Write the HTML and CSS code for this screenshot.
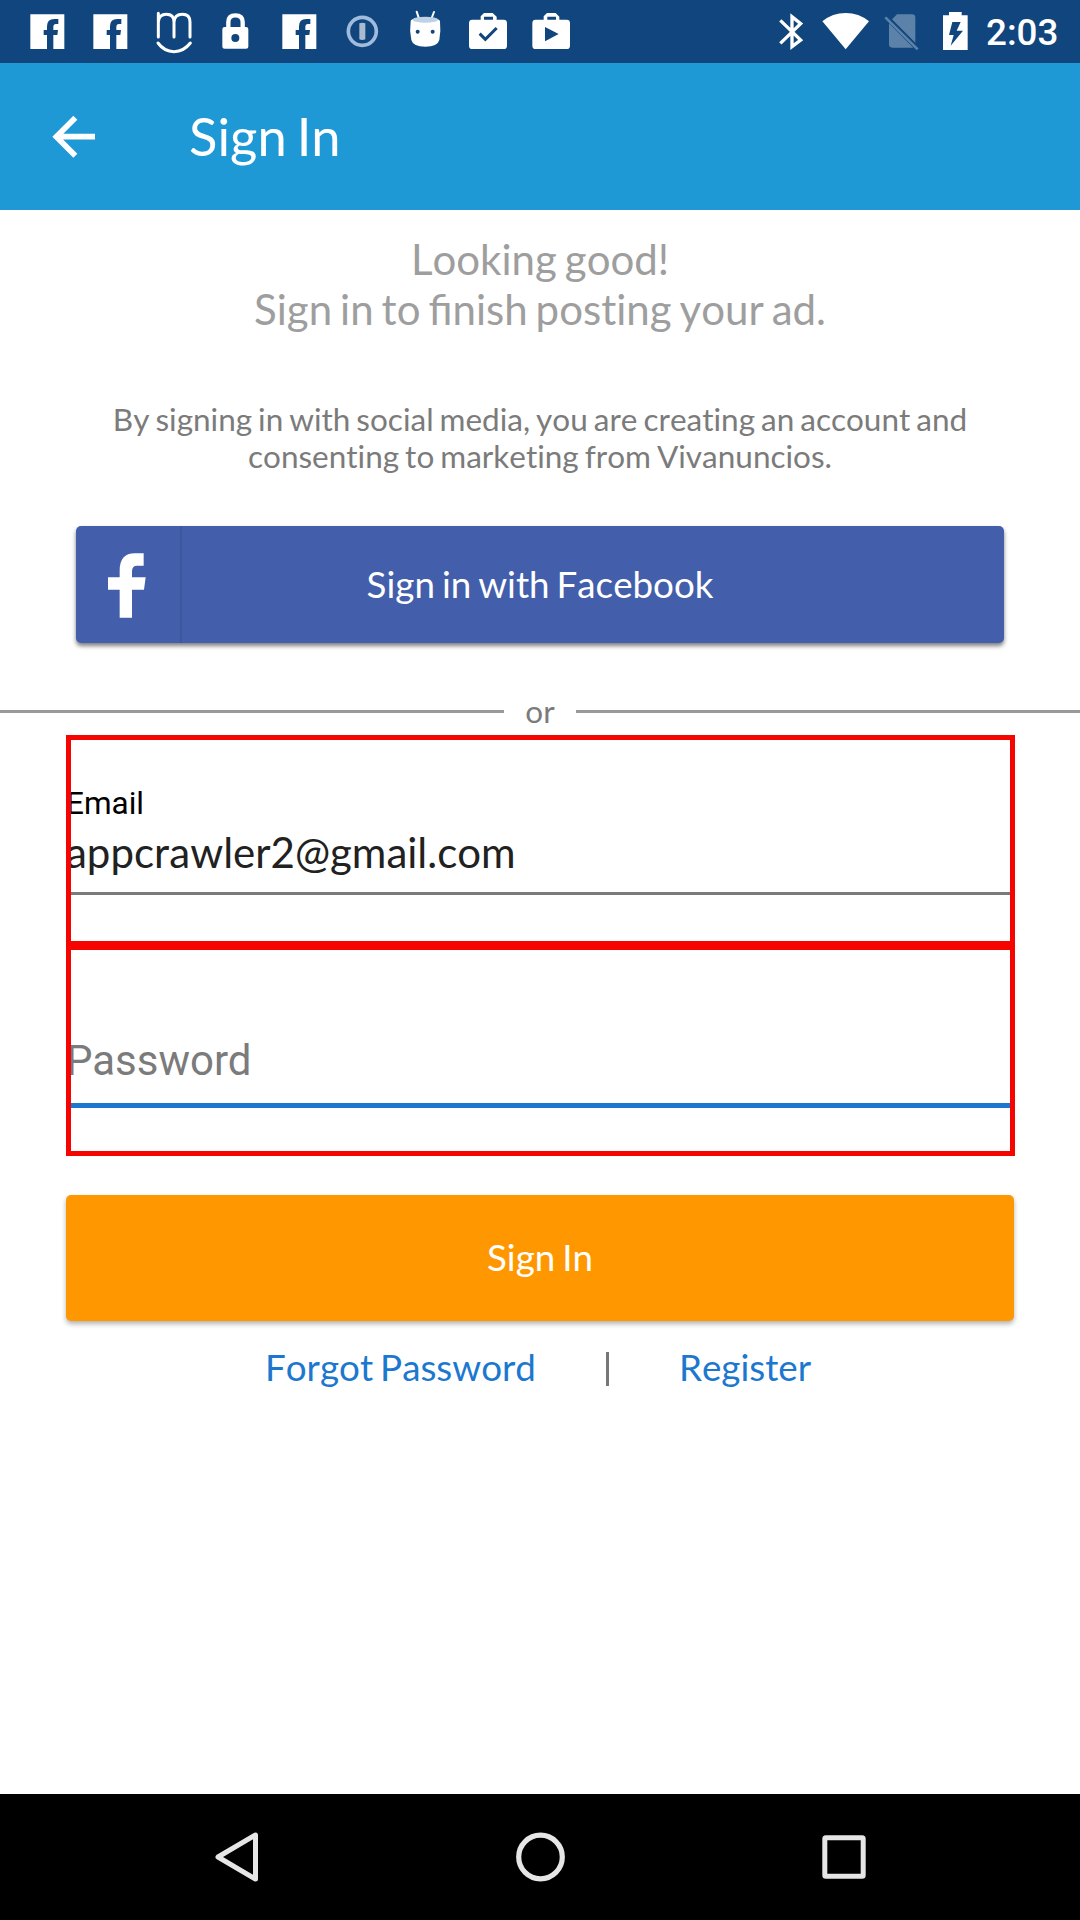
FILE: index.html
```html
<!DOCTYPE html>
<html lang="en">
<head>
<meta charset="utf-8">
<title>Sign In</title>
<link rel="stylesheet" href="styles.css">
</head>
<body>
<div class="screen">
  <header class="status-bar">
    <div class="notifications">
      <svg class="slot" viewBox="48 0 189 189"><path fill="#fff" fill-rule="evenodd" d="M91 43H193V147H160V105H172L174 90H160V81Q160 72 168 72H175V57H163Q141 57 141 79V90H131V105H141V147H91Z"/></svg>
      <svg class="slot" viewBox="48 0 189 189"><path fill="#fff" fill-rule="evenodd" d="M91 43H193V147H160V105H172L174 90H160V81Q160 72 168 72H175V57H163Q141 57 141 79V90H131V105H141V147H91Z"/></svg>
      <svg class="slot" viewBox="426 0 189 189"><path fill="none" stroke="#fff" stroke-width="9" stroke-linecap="round" d="M475 40V111M475 66Q477 43 499 43Q522 43 522 66V111M522 66Q524 43 547 43Q570 43 570 66V111M474 129Q492 154 522 155Q552 154 571 129"/></svg>
      <svg class="slot" viewBox="615 0 189 189"><path fill="none" stroke="#fff" stroke-width="13" d="M685 84V66Q685 46 706 46Q728 46 728 66V84"/><path fill="#fff" fill-rule="evenodd" d="M674 81H738Q745 81 745 88V140Q745 146 738 146H674Q667 146 667 140V88Q667 81 674 81ZM706 102A12 12 0 1 0 706 126A12 12 0 1 0 706 102Z"/></svg>
      <svg class="slot" viewBox="48 0 189 189"><path fill="#fff" fill-rule="evenodd" d="M91 43H193V147H160V105H172L174 90H160V81Q160 72 168 72H175V57H163Q141 57 141 79V90H131V105H141V147H91Z"/></svg>
      <svg class="slot" viewBox="183 0 189 189"><circle cx="277" cy="94" r="42" fill="none" stroke="#a0bbdb" stroke-width="11"/><path fill="#a9bacf" d="M268 70Q277 66 286 70V118Q277 122 268 118Z"/></svg>
      <svg class="slot" viewBox="372 0 189 189"><path stroke="#fff" stroke-width="6" stroke-linecap="round" d="M440 35L446 53M492 36L485 54"/><path fill="#fff" d="M422 64Q422 54 465 54Q509 54 510 64Q513 94 508 120Q503 140 466 140Q429 140 424 120Q418 92 422 64Z"/><ellipse cx="466" cy="59" rx="38" ry="9" fill="#bfd2e5"/><circle cx="443" cy="95" r="6" fill="#10457d"/><circle cx="488" cy="95" r="6" fill="#10457d"/></svg>
      <svg class="slot" viewBox="561 0 189 189"><path fill="#fff" fill-rule="evenodd" d="M642 39H668L680 50V59H701Q711 59 711 69V137Q711 147 701 147H607Q597 147 597 137V69Q597 59 607 59H632V49ZM642 50V59H669V50Z"/><path fill="none" stroke="#10457d" stroke-width="9" d="M629 101L646 118L680 84"/></svg>
      <svg class="slot" viewBox="750 0 189 189"><path fill="#fff" fill-rule="evenodd" d="M831 39H857L868 50V59H890Q900 59 900 69V137Q900 147 890 147H797Q787 147 787 137V69Q787 59 797 59H821V49ZM832 50V59H858V50Z"/><path fill="#10457d" d="M825 81L866 102L825 124Z"/></svg>
    </div>
    <div class="system">
      <svg class="bluetooth" viewBox="30 0 126 189"><path fill="none" stroke="#fff" stroke-width="10" d="M61 61L122 120L96 140V50L122 71L61 130"/></svg>
      <svg class="wifi" viewBox="156 0 192 189"><path fill="#fff" d="M187 64Q217 39 257 39Q297 39 327 64L257 148Z"/></svg>
      <svg class="sim" viewBox="348 0 162 189"><path fill="#5d82a9" d="M411 43H456Q466 43 466 53V128L396 58ZM387 70L460 143H397Q387 143 387 133Z"/><path stroke="#5d82a9" stroke-width="8" d="M376 52L473 148"/></svg>
      <svg class="battery" viewBox="510 0 138 189"><path fill="#fff" d="M567 36H605V46H623V150H549V46H567Z"/><path fill="#10457d" d="M577 66H602L590 92H609L572 137L581 105H567Z"/></svg>
      <span class="clock">2:03</span>
    </div>
  </header>

  <div class="app-bar">
    <svg class="back" viewBox="150 0 144 441"><path fill="none" stroke="#fff" stroke-width="17" d="M285 221H172M226 164L169 221L226 278"/></svg>
    <h1 class="title">Sign In</h1>
  </div>

  <main class="content">
    <p class="headline">Looking good!<br>Sign in to <span class="ligature">fi</span>nish posting your ad.</p>
    <p class="consent">By signing in with social media, you are creating an account and<br>consenting to marketing from Vivanuncios.</p>

    <button class="facebook">
      <span class="facebook-icon"><svg class="facebook-mark" viewBox="48 48 315 351"><path fill="#fff" d="M179 323V239H144V202H179V182Q179 130 224 130H251V167H231Q216 167 216 184V202H257L252 239H216V323Z"/></svg></span>
      <span class="facebook-label">Sign in with Facebook</span>
    </button>

    <div class="divider"><span class="or">or</span></div>

    <div class="fields">
      <div class="field email">
        <span class="field-label">Email</span>
        <span class="field-value">appcrawler2@gmail.com</span>
      </div>
      <div class="field password">
        <span class="field-hint">Password</span>
      </div>
    </div>

    <button class="submit">Sign In</button>

    <nav class="links">
      <a class="link">Forgot Password</a>
      <span class="links-rule"></span>
      <a class="link">Register</a>
    </nav>
  </main>

  <footer class="nav-bar">
    <svg class="nav-icon" viewBox="0 0 60 60"><path fill="none" stroke="#e6e6e6" stroke-width="5" stroke-linejoin="round" d="M48.5 8V52L11 30Z"/></svg>
    <svg class="nav-icon" viewBox="0 0 60 60"><circle cx="29.5" cy="30" r="21.8" fill="none" stroke="#e6e6e6" stroke-width="5.2"/></svg>
    <svg class="nav-icon" viewBox="0 0 60 60"><rect x="10.8" y="10.8" width="38.4" height="38.4" rx="1" fill="none" stroke="#e6e6e6" stroke-width="5"/></svg>
  </footer>
</div>
</body>
</html>
```
FILE: styles.css
```css
* {
  box-sizing: border-box;
  word-spacing: -0.066em;
}

body {
  margin: 0;
}

h1,
p {
  margin: 0;
  font-weight: 400;
}

svg {
  display: block;
  flex: none;
}

button {
  border: 0;
  padding: 0;
  font: 36.75px/44px Lato, sans-serif;
  color: #fff;
}

.screen,
button {
  font-kerning: none;
  font-variant-ligatures: none;
}

.screen {
  width: 1080px;
  height: 1920px;
  display: flex;
  flex-direction: column;
  overflow: hidden;
  background: #fff;
  font-family: Lato, sans-serif;
}

.status-bar {
  flex: none;
  height: 63px;
  padding: 0 23px 0 16px;
  display: flex;
  justify-content: space-between;
  background: #10457d;
}

.notifications,
.system {
  display: flex;
}

.slot {
  width: 63px;
  height: 63px;
}

.bluetooth {
  width: 42px;
  height: 63px;
}

.wifi {
  width: 64px;
  height: 63px;
}

.sim {
  width: 54px;
  height: 63px;
}

.battery {
  width: 46px;
  height: 63px;
}

.clock {
  width: 81px;
  padding-left: 10px;
  font: 500 36.75px/66px Roboto, sans-serif;
  color: #fff;
}

.app-bar {
  flex: none;
  height: 147px;
  padding-left: 50px;
  display: flex;
  align-items: center;
  gap: 91px;
  background: #1f98d6;
}

.back {
  width: 48px;
  height: 147px;
}

.title {
  padding-bottom: 2px;
  font-size: 52.5px;
  line-height: 63px;
  color: #fff;
}

.content {
  flex: 1;
  display: flex;
  flex-direction: column;
}

.headline {
  height: 100px;
  margin-top: 24px;
  font-size: 42px;
  line-height: 50.4px;
  text-align: center;
  color: #9e9e9e;
}

.ligature {
  font-variant-ligatures: common-ligatures;
}

.consent {
  margin-top: 67px;
  font-size: 31.5px;
  line-height: 37px;
  text-align: center;
  color: #7b7b7b;
}

.facebook {
  flex: none;
  height: 117px;
  margin: 51px 76px 0;
  display: grid;
  grid-template-columns: 106px 1fr 106px;
  align-items: center;
  border-radius: 5px;
  background: #435eaa;
  box-shadow: 0 3px 4px rgba(0, 0, 0, 0.5);
}

.facebook-icon {
  border-right: 2px solid #3d569c;
}

.facebook-mark {
  width: 105px;
  height: 117px;
}

.facebook-label {
  padding-bottom: 2px;
}

.divider {
  height: 44px;
  margin-top: 46px;
  display: flex;
  align-items: center;
}

.divider::before,
.divider::after {
  content: "";
  flex: 1;
  height: 3px;
  background: #999;
}

.or {
  width: 72px;
  font-size: 31.5px;
  line-height: 38px;
  text-align: center;
  color: #7b7b7b;
}

.fields {
  width: 949px;
  margin: 2px 0 0 66px;
}

.field {
  height: 211px;
  display: flex;
  flex-direction: column;
  border: 5px solid #f50400;
}

.field::after {
  content: "";
}

.email::after {
  height: 3px;
  margin-top: 15px;
  background: #7a7a7a;
}

.password {
  margin-top: -1px;
}

.password::after {
  height: 5px;
  margin-top: 17px;
  background: #1c78cf;
}

.field-label {
  margin: 45px 0 0 -5px;
  font: 31.5px/37px Roboto, sans-serif;
  color: #000;
  clip-path: inset(0 0 0 5px);
}

.field-value {
  margin: 5px 0 0 -5px;
  font-size: 42px;
  line-height: 50px;
  color: #212121;
  clip-path: inset(0 0 0 5px);
}

.field-hint {
  margin: 86px 0 0 -5px;
  font: 42px/50px Roboto, sans-serif;
  color: #7b7b7b;
  clip-path: inset(0 0 0 5px);
}

.submit {
  flex: none;
  height: 126px;
  margin: 39px 66px 0;
  padding-bottom: 2px;
  border-radius: 5px;
  background: #ff9800;
  box-shadow: 0 3px 5px rgba(0, 0, 0, 0.3);
}

.links {
  margin: 24px 0 0 265px;
  display: flex;
  align-items: center;
}

.link {
  font-size: 36.75px;
  line-height: 44px;
  color: #1c78cf;
}

.links-rule {
  width: 3px;
  height: 34px;
  margin: 3px 70px 0;
  background: #777;
}

.nav-bar {
  flex: none;
  height: 126px;
  padding: 0 206px 0 207px;
  display: flex;
  align-items: center;
  justify-content: space-between;
  background: #000;
}

.nav-icon {
  width: 60px;
  height: 60px;
}
```
